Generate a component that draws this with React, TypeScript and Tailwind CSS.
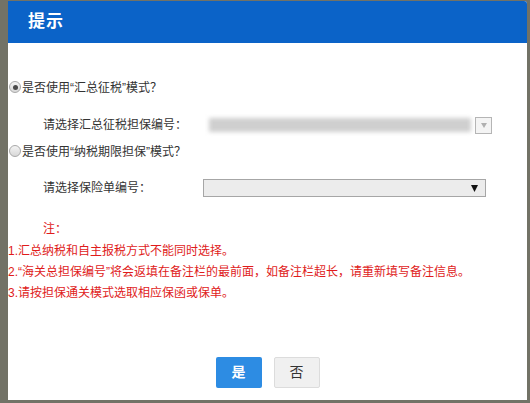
import React from "react";

const font = { fontFamily: '"Liberation Sans", "Noto Sans CJK SC", sans-serif' };
const cjk = { fontFamily: '"Noto Sans CJK SC", sans-serif' };

function Radio({ checked }: { checked?: boolean }) {
  return (
    <span className="w-[12px] h-[12px] rounded-full border border-[#a9a9a9] bg-gradient-to-b from-[#f4f4f4] to-[#d8d8d8] flex items-center justify-center shrink-0">
      {checked && <span className="w-[5px] h-[5px] rounded-full bg-[#4a4a4a]" />}
    </span>
  );
}

export default function App() {
  return (
    <div className="w-[530px] h-[403px] bg-[#727266] pl-[8px] pr-[3px] pt-[1px] pb-[3px] overflow-hidden" style={font}>
      <div className="w-full h-full bg-white flex flex-col rounded-tr-[3px] overflow-hidden">
        <div className="h-[42px] bg-[#0b63c8] flex items-center pl-[20px] shrink-0">
          <span className="text-white text-[17px] font-bold tracking-[1px]">提示</span>
        </div>

        <div className="mt-[34px] h-[20px] flex items-center text-[12px] text-[#333]">
          <span className="ml-[1px]"><Radio checked /></span>
          <span className="ml-[1px]">是否使用“汇总征税”模式<span style={cjk}>？</span></span>
        </div>

        <div className="mt-[18px] h-[20px] flex items-center text-[12px] text-[#333]">
          <span className="w-[195px] pl-[35px]">请选择汇总征税担保编号：</span>
          <div className="relative w-[289px] h-[17px] flex items-center">
            <div className="w-[262px] h-[14px] bg-[#cfcfcf] blur-[2px] ml-[6px]" />
            <div className="ml-auto w-[17px] h-[17px] border border-[#b5b5b5] bg-[#f4f4f4] flex items-center justify-center">
              <svg width="6" height="5" viewBox="0 0 6 5"><path d="M0 0 H6 L3 5 Z" fill="#b0b0b0" /></svg>
            </div>
          </div>
        </div>

        <div className="mt-[6px] h-[20px] flex items-center text-[12px] text-[#333]">
          <span className="ml-[1px]"><Radio /></span>
          <span className="ml-[1px]">是否使用“纳税期限担保”模式<span style={cjk}>？</span></span>
        </div>

        <div className="mt-[17px] h-[20px] flex items-center text-[12px] text-[#333]">
          <span className="w-[195px] pl-[35px]">请选择保险单编号：</span>
          <div className="w-[283px] h-[18px] border border-[#a6a6a6] bg-[#ececec] flex items-center justify-end pr-[7px]">
            <svg width="7" height="7" viewBox="0 0 7 7"><path d="M0 0 H7 L3.5 7 Z" fill="#111" /></svg>
          </div>
        </div>

        <div className="mt-[21px] h-[20px] flex items-center text-[12px] text-[#e01b1b] pl-[35px]">注：</div>

        <div className="mt-[2px] text-[12px] leading-[21px] text-[#e01b1b]">
          <div>1.汇总纳税和自主报税方式不能同时选择。</div>
          <div>2.“海关总担保编号”将会返填在备注栏的最前面，如备注栏超长，请重新填写备注信息。</div>
          <div>3.请按担保通关模式选取相应保函或保单。</div>
        </div>

        <div className="flex-1" />

        <div className="flex justify-center gap-[12px] mb-[12px]">
          <button className="w-[46px] h-[31px] bg-[#2d8ce3] text-white text-[14px] font-bold rounded-[2px]">是</button>
          <button className="w-[46px] h-[31px] bg-[#f0f0f0] border border-[#dcdcdc] text-[#333] text-[14px] rounded-[2px]">否</button>
        </div>
      </div>
    </div>
  );
}
